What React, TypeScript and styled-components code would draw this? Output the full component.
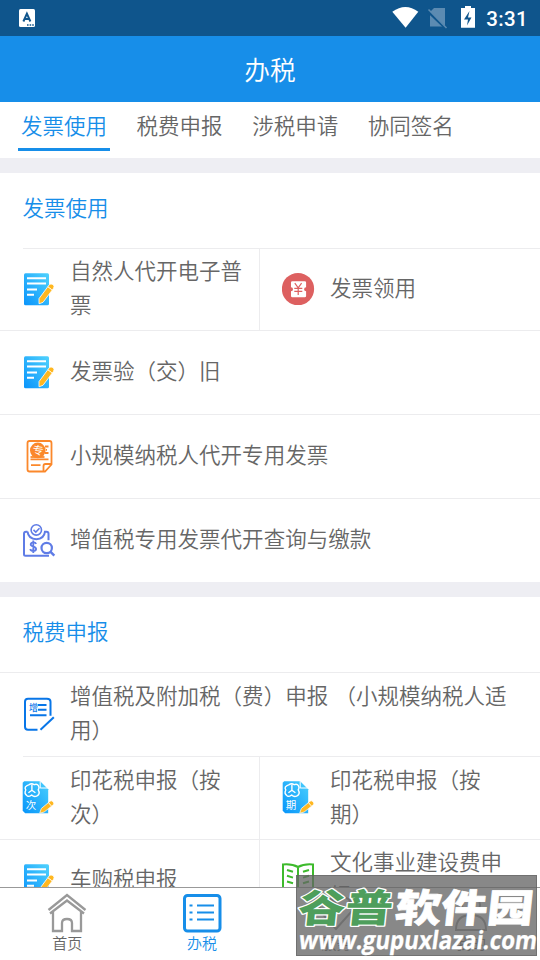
import React from 'react';
import styled, { createGlobalStyle } from 'styled-components';

const Global = createGlobalStyle`
  * { box-sizing: border-box; }
  html, body { margin: 0; padding: 0; background: #fff; overflow: hidden; }
  body { color: #666; }
`;

const Screen = styled.div`
  position: relative;
  width: 540px;
  height: 960px;
  display: flex;
  flex-direction: column;
  overflow: hidden;
  background: #fff;
  font-family: 'Noto Sans CJK SC', sans-serif;
  font-weight: 350;
`;

const StatusBar = styled.div`
  flex: none;
  height: 36px;
  background: #0f558c;
  display: flex;
  align-items: center;
  padding: 0 12px 0 19px;
  color: #fff;
`;
const StatusIcons = styled.div`
  margin-left: auto;
  display: flex;
  align-items: center;
`;
const Clock = styled.span`
  font: 500 20.5px/36px Roboto, sans-serif;
  letter-spacing: 0.35px;
  margin-left: 6px;
  padding-top: 1px;
`;

const Header = styled.header`
  flex: none;
  height: 66px;
  background: #178ee9;
  color: #fff;
  font-size: 25.7px;
  line-height: 65px;
  text-align: center;
`;

const Tabs = styled.nav`
  flex: none;
  height: 56px;
  display: flex;
  gap: 23.6px;
  padding-left: 18px;
`;
const Tab = styled.div<{ $active?: boolean }>`
  width: 92px;
  height: 49px;
  font-size: 21.5px;
  line-height: 45px;
  text-align: center;
  white-space: nowrap;
  color: ${(p) => (p.$active ? '#178ee9' : '#666')};
  border-bottom: 3px solid ${(p) => (p.$active ? '#178ee9' : 'transparent')};
`;

const Content = styled.main`
  flex: 1;
  min-height: 0;
  overflow: hidden;
`;
const Section = styled.section`
  border-top: 15px solid #eeeef3;
`;
const SectionTitle = styled.h2`
  margin: 0;
  height: 75px;
  padding-left: 22.5px;
  font-size: 21.5px;
  font-weight: inherit;
  line-height: 68px;
  color: #178ee9;
`;
const Row = styled.div<{ $h: number; $inset?: boolean }>`
  height: ${(p) => p.$h}px;
  display: flex;
  background: linear-gradient(#ececee, #ececee) ${(p) => (p.$inset ? 23 : 0)}px 0 / 100% 1px no-repeat;
`;
const Cell = styled.div<{ $half?: boolean }>`
  width: ${(p) => (p.$half ? '260px' : 'auto')};
  flex: ${(p) => (p.$half ? 'none' : '1')};
  display: flex;
  align-items: center;
  padding: 0 15px 0 22px;
  & + & { padding-right: 24px; }
  border-right: ${(p) => (p.$half ? '1px solid #ececee' : '0')};
`;
const IconBox = styled.span`
  flex: none;
  width: 34px;
  height: 34px;
  margin-right: 14px;
  display: flex;
`;
const Label = styled.span`
  font-size: 21.53px;
  line-height: 33.6px;
  word-spacing: 1.5px;
  padding-bottom: 4px;
`;

const BottomNav = styled.nav`
  flex: none;
  height: 73px;
  border-top: 1px solid #999;
  background: #fff;
  display: flex;
`;
const NavItem = styled.div<{ $active?: boolean }>`
  width: 134.6px;
  display: flex;
  flex-direction: column;
  align-items: center;
  padding-top: 5px;
  font-size: 15px;
  line-height: 20px;
  color: ${(p) => (p.$active ? '#178ee9' : '#666')};
`;

const Watermark = styled.div`
  position: absolute;
  left: 296px;
  top: 875px;
  width: 241px;
  height: 81px;
  background: rgba(100, 100, 100, 0.77);
  box-shadow: inset 0 0 0 1px rgba(90, 90, 90, 0.5);
`;

const NoteIcon = () => (
  <svg width="34" height="34" viewBox="0 -0.3 34 34">
    <defs>
      <linearGradient id="note" x1="1" y1="0" x2="0" y2="1">
        <stop offset="0" stopColor="#50d2fd" />
        <stop offset="1" stopColor="#0a94fb" />
      </linearGradient>
    </defs>
    <rect x="2" y="1" width="25" height="32" rx="1.5" fill="url(#note)" />
    <path d="M5 6h19M5 11.3h19M5 17.2h10M5 22.500h7" stroke="#fff" strokeWidth="2" fill="none" />
    <path d="M17 31.5v-5.2L27.3 12.4q1.600-1.500 3.600-.1t.7 3.600L21 30z" fill="#ffb71f" stroke="#fff" strokeWidth="0.8" />
    <path d="M25.8 14.4l4 3" stroke="#fff" strokeWidth="1" />
  </svg>
);
const CouponIcon = () => (
  <svg width="34" height="34" viewBox="0 0 34 34">
    <circle cx="16" cy="17" r="16.1" fill="#dd6060" />
    <path d="M10.4 9.2h12.3q1.4 0 1.4 1.4v4.600a2 2 0 0 0 0 4v4.700q0 1.4-1.4 1.4H10.4q-1.4 0-1.4-1.4v-4.700a2 2 0 0 0 0-4v-4.600q0-1.4 1.4-1.4z" fill="#fff" />
    <path d="M12.8 11.2l3.4 4.600 3.4-4.600M12.3 16.3h8M12.3 19.4h8M16.2 16v7" stroke="#dd6060" strokeWidth="1.2" fill="none" />
  </svg>
);
const SpecialInvoiceIcon = () => (
  <svg width="34" height="34" viewBox="0 0 34 34" fill="none" stroke="#fb882b" strokeWidth="1.8">
    <path d="M7.5 2h20q2 0 2 2v21.500l-6.500 7H7.5q-2 0-2-2V4q0-2 2-2z" />
    <path d="M21.5 32v-5q0-2 2-2h5.500M23 7.500h3.500M23 14h3.500M24 10.800h1M8.5 20.300h18M9 26.200h9.500" />
    <circle cx="15.8" cy="11.4" r="7.8" fill="#fb882b" stroke="none" />
    <path d="M8.5 18h14" />
    <text x="15.8" y="15.4" fontSize="11" fontWeight="400" textAnchor="middle" fill="#fff" stroke="none" transform="rotate(8 15.8 12)">专</text>
  </svg>
);
const QueryIcon = () => (
  <svg width="34" height="34" viewBox="0 -0.7 34 34" fill="none" stroke="#5f7ce6" strokeWidth="2">
    <circle cx="14.3" cy="6.200" r="5.2" strokeWidth="1.6" />
    <path d="M11.5 6.200l2.300 2.200 3.700-3.800" strokeWidth="1.5" />
    <path d="M5.5 8H4q-2 0-2 2v20.500q0 1.500 1.500 1.500H27M5.500 8q1 7.500 8.800 7.500T23 8h1.500q2 0 2 2v6.500" />
    <circle cx="24.7" cy="24.300" r="5.2" strokeWidth="2.2" />
    <path d="M28.3 28l4 4" strokeWidth="2.5" />
    <path d="M14.2 20.200q-.7-1.600-2.900-1.600t-2.600 1.900q-.2 1.700 2.600 2.400t2.800 2.500q-.3 1.900-2.800 1.900t-3.100-2M11.300 16.800v12.400" strokeWidth="1.8" />
  </svg>
);
const VatIcon = () => (
  <svg width="34" height="34" viewBox="0 -0.700 34 34" fill="none" stroke="#0876e8" strokeWidth="2">
    <path d="M15.500 32H6q-3 0-3-3V4q0-3 3-3h19q3.500 0 3.500 3v14" />
    <path d="M16 7.200h8.500M16 12h8.500M8 17.500h16.500" />
    <path d="M18.500 32L31.800 19.500" />
    <text x="11.400" y="13.200" fontSize="9" fontWeight="500" textAnchor="middle" fill="#0876e8" stroke="none">增</text>
  </svg>
);
const StampIcon = ({ mark }: { mark: string }) => (
  <svg width="34" height="34" viewBox="0.800 0.800 34 34">
    <defs>
      <linearGradient id="stamp" x1="1" y1="0" x2="0" y2="1">
        <stop offset="0" stopColor="#4bcffd" />
        <stop offset="1" stopColor="#0795fa" />
      </linearGradient>
    </defs>
    <path d="M3 1H19l8 8v24H4L1.500 30.500V2.500z" fill="url(#stamp)" />
    <path d="M19 1v6.800h7.500" stroke="#fff" fill="none" strokeWidth="1" />
    <path d="M8 4.400q2.500-1.700 5 .1 4-1.500 4.800 2.600 0 1.700-.8 2.600 2.600 4-1.600 6.300-2.700 1-4.900-1.100-2.200 2.100-4.600.7-3.300-2.300-1.300-5.800Q2.200 6.400 8 4.400zM10.700 4.500v5.500M10.700 10l-3.500 2.500M10.700 10l3.500 2.500" stroke="#fff" fill="none" strokeWidth="1.4" />
    <text x="9.900" y="29.200" fontSize="10.500" fontWeight="400" textAnchor="middle" fill="#fff">{mark}</text>
    <path d="M18.500 33l1.600-4.700 8.800-7.300q1.400-.9 2.900.5t.4 3L23 31.800z" fill="#ffb71f" stroke="#fff" strokeWidth="0.7" />
    <path d="M27.300 22.500l2.800 3.200" stroke="#fff" />
  </svg>
);
const BookIcon = () => (
  <svg width="34" height="34" viewBox="0 1.500 34 34" fill="none" stroke="#3dba2c" strokeWidth="2">
    <path d="M1 32V3q9-.8 15 2.500Q22 2.200 31 3v29M16 5.500V32M1 28h30" />
    <path d="M5 8.500l6 1.800M5 14.300l6 1.800M5 20l6 1.800M21 10.300l6-1.800M21 16.100l6-1.800M21 21.800l6-1.800" />
  </svg>
);

const Item = ({ icon, half, children }: { icon: React.ReactNode; half?: boolean; children: React.ReactNode }) => (
  <Cell $half={half}>
    <IconBox>{icon}</IconBox>
    <Label>{children}</Label>
  </Cell>
);

const WatermarkArt = () => (
  <svg width="241" height="81" viewBox="296 875 241 81">
    <g fontFamily="'Noto Sans CJK SC', sans-serif" fontWeight="900" fontSize="43" strokeLinejoin="round" paintOrder="stroke">
      <g transform="translate(297 922) skewX(-6) scale(1.100 .9)">
        <text x="0" y="0" fill="#4e9e5c" stroke="#fff" strokeWidth="2.800">谷普</text>
      </g>
      <g transform="translate(394 922) skewX(-6) scale(1.070 .9)">
        <text x="0" y="0" fill="#fff" stroke="#fff" strokeWidth="0.800">软件园</text>
      </g>
    </g>
    <g transform="translate(298 948.500) skewX(-8)">
      <text x="0" y="0" textLength="238" lengthAdjust="spacingAndGlyphs" fontFamily="'Open Sans', sans-serif" fontWeight="700" fontSize="25" fill="#fff" stroke="#fff" strokeWidth="0.300">www.gupuxlazai.com</text>
    </g>
  </svg>
);

export default function App() {
  return (
    <Screen>
      <Global />
      <StatusBar>
        <svg width="16" height="18" viewBox="0 0 16 18">
          <rect width="16" height="18" rx="1.5" fill="#fff" />
          <path d="M4.400 12.500L7.900 4.700l3.500 7.800M5.700 10h4.500" fill="none" stroke="#0f558c" strokeWidth="2" />
          <path d="M8 16h7" stroke="#0f558c" strokeWidth="1.3" strokeDasharray="1.6 1" />
        </svg>
        <StatusIcons>
          <svg width="88" height="24" viewBox="392 6 88 24">
            <path d="M392.300 11.700q13.200-9.500 26 0l-12.700 16z" fill="#fff" />
            <path d="M434 8h11v18.500h-15V12z" fill="#5c8bb2" />
            <path d="M427.500 11l19 18" stroke="#0f558c" strokeWidth="2.500" />
            <path d="M428.500 9.500l18 18.500" stroke="#5c8bb2" strokeWidth="1.500" />
            <path d="M461 8h4V6h6v2h4v19.700h-14z" fill="#fff" />
            <path d="M469.500 11l-5.500 8.500h4l-1 6 4.500-8h-3.500z" fill="#0f558c" />
          </svg>
          <Clock>3:31</Clock>
        </StatusIcons>
      </StatusBar>
      <Header>办税</Header>
      <Tabs>
        <Tab $active>发票使用</Tab>
        <Tab>税费申报</Tab>
        <Tab>涉税申请</Tab>
        <Tab>协同签名</Tab>
      </Tabs>
      <Content>
        <Section>
          <SectionTitle>发票使用</SectionTitle>
          <Row $h={82} $inset>
            <Item half icon={<NoteIcon />}>自然人代开电子普票</Item>
            <Item icon={<CouponIcon />}>发票领用</Item>
          </Row>
          <Row $h={84}><Item icon={<NoteIcon />}>发票验（交）旧</Item></Row>
          <Row $h={84}><Item icon={<SpecialInvoiceIcon />}>小规模纳税人代开专用发票</Item></Row>
          <Row $h={84}><Item icon={<QueryIcon />}>增值税专用发票代开查询与缴款</Item></Row>
        </Section>
        <Section>
          <SectionTitle>税费申报</SectionTitle>
          <Row $h={84}><Item icon={<VatIcon />}>增值税及附加税（费）申报 （小规模纳税人适用）</Item></Row>
          <Row $h={83} $inset>
            <Item half icon={<StampIcon mark="次" />}>印花税申报（按次）</Item>
            <Item icon={<StampIcon mark="期" />}>印花税申报（按<br />期）</Item>
          </Row>
          <Row $h={82}>
            <Item half icon={<NoteIcon />}>车购税申报</Item>
            <Item icon={<BookIcon />}>文化事业建设费申报</Item>
          </Row>
        </Section>
      </Content>
      <BottomNav>
        <NavItem>
          <svg width="40" height="40" viewBox="0 0 40 40" fill="none" stroke="#999" strokeWidth="2.300">
            <path d="M1.500 17L20 2l18.500 15M3 20.500L20 7.500l17 13M6 19v19h9v-8q0-4 5-4t5 4v8h9V19" />
          </svg>
          首页
        </NavItem>
        <NavItem $active>
          <svg width="40" height="40" viewBox="0 0 40 40" fill="none" stroke="#178ee9">
            <rect x="2.500" y="2.500" width="35.500" height="35.500" rx="3" strokeWidth="3" />
            <path d="M15 12.500h17M15 19.500h17M15 26.500h17M7.500 12.500h3M7.500 19.500h3M7.500 26.500h3" strokeWidth="2" />
          </svg>
          办税
        </NavItem>
        <NavItem>
          <svg width="40" height="40" viewBox="0 0 40 40" fill="none" stroke="#999" strokeWidth="2">
            <path d="M20 36L4 18Q2 7 12 4l8 5 8-5q10 3 8 14z" />
          </svg>
          服务
        </NavItem>
        <NavItem>
          <svg width="40" height="40" viewBox="0 0 40 40" fill="none" stroke="#999" strokeWidth="2">
            <circle cx="20" cy="12" r="9" />
            <path d="M5 37q0-15 15-15t15 15z" />
          </svg>
          我的
        </NavItem>
      </BottomNav>
      <Watermark><WatermarkArt /></Watermark>
    </Screen>
  );
}
